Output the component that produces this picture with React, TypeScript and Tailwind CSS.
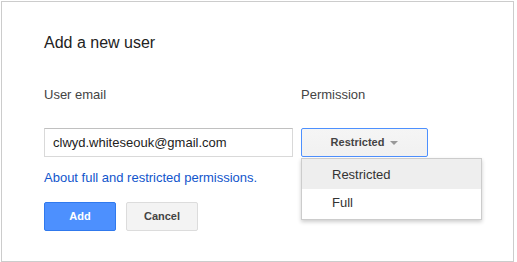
import React from 'react';

const App: React.FC = () => {
  return (
    <div className="w-[517px] h-[262px] bg-white font-['Liberation_Sans',Arial,sans-serif]">
      <div className="ml-px mt-px w-[513px] h-[261px] border border-[#cccccc] bg-white pl-[42px] pt-[31px]">
        <h1 className="text-[16px] leading-[20px] text-[#222222]">Add a new user</h1>

        {/* labels */}
        <div className="mt-[34px] flex text-[13px] leading-[16px] text-[#444444]">
          <div className="w-[257px]">User email</div>
          <div>Permission</div>
        </div>

        {/* fields */}
        <div className="mt-[25px] flex">
          <input
            readOnly
            value="clwyd.whiteseouk@gmail.com"
            className="w-[249px] h-[29px] border border-[#d9d9d9] border-t-[#c0c0c0] px-[8px] text-[13px] text-[#222222] outline-none"
          />
          <div className="relative ml-[8px]">
            <button className="flex h-[29px] w-[127px] items-center justify-center rounded-[2px] border border-[#4d90fe] bg-gradient-to-b from-[#f5f5f5] to-[#f1f1f1] text-[11px] font-bold text-[#444444]">
              <span>Restricted</span>
              <span className="ml-[6px] mt-[1px] h-0 w-0 border-x-[4px] border-t-[4px] border-x-transparent border-t-[#999999]" />
            </button>
            <div className="absolute left-0 top-[30px] z-10 w-[181px] border border-[#cccccc] bg-white shadow-[0_2px_4px_rgba(0,0,0,0.2)] text-[13px] text-[#333333]">
              <div className="h-[30px] bg-[#eeeeee] pl-[30px] leading-[31px]">Restricted</div>
              <div className="h-[30px] pl-[30px] leading-[28px]">Full</div>
            </div>
          </div>
        </div>

        <a href="#" className="mt-[13px] block text-[13px] leading-[16px] text-[#1155cc]">
          About full and restricted permissions.
        </a>

        {/* actions */}
        <div className="mt-[16px] flex">
          <button className="h-[29px] w-[72px] rounded-[2px] border border-[#3079ed] bg-[#4d90fe] text-[11px] font-bold text-white">
            Add
          </button>
          <button className="ml-[10px] h-[29px] w-[72px] rounded-[2px] border border-[#dcdcdc] bg-[#f3f3f3] text-[11px] font-bold text-[#444444]">
            Cancel
          </button>
        </div>
      </div>
    </div>
  );
};

export default App;
